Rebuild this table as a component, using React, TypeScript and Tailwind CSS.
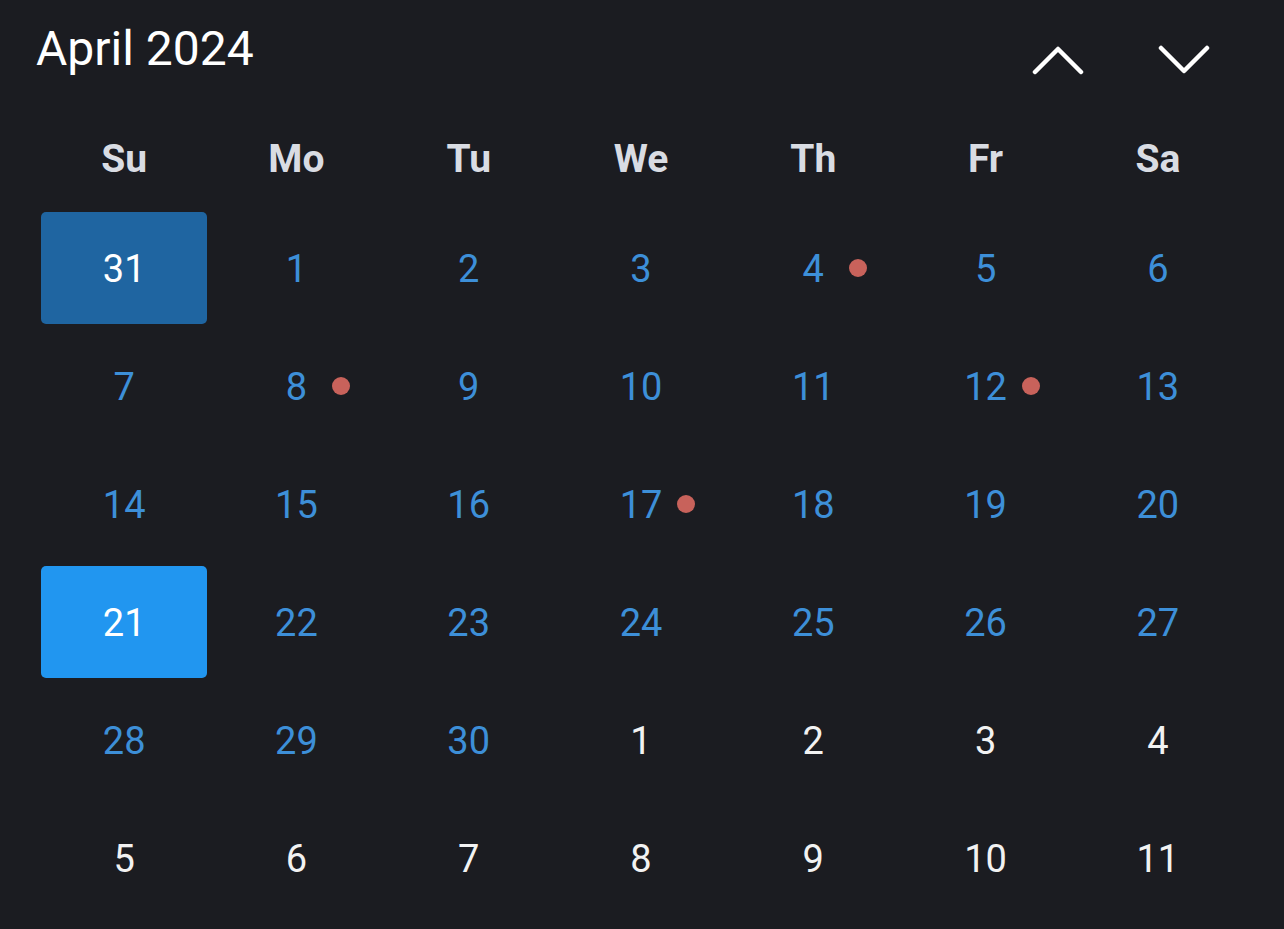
import React from "react";

const DAYS = ["Su", "Mo", "Tu", "We", "Th", "Fr", "Sa"];

type Cell = { d: number; cur: boolean; dot?: boolean; sel?: "dark" | "bright" };

const cells: Cell[] = [
  { d: 31, cur: true, sel: "dark" },
  ...Array.from({ length: 30 }, (_, i) => ({ d: i + 1, cur: true, dot: [4, 8, 12, 17].includes(i + 1), sel: i + 1 === 21 ? ("bright" as const) : undefined })),
  ...Array.from({ length: 11 }, (_, i) => ({ d: i + 1, cur: false })),
];

const Chevron = ({ up }: { up?: boolean }) => (
  <svg width="52" height="30" viewBox="0 0 52 30" fill="none" stroke="#ffffff" strokeWidth="4.5" strokeLinecap="round" strokeLinejoin="round">
    {up ? <path d="M3 27 L26 4 L49 27" /> : <path d="M3 3 L26 26 L49 3" />}
  </svg>
);

export default function App() {
  return (
    <div className="h-[929px] w-[1284px] overflow-hidden bg-[#1b1c21] pt-[21px] font-['Roboto',sans-serif]">
      <div className="flex items-start justify-between pl-[36px] pr-[37px]">
        <h1 className="text-[48px] leading-[56px] text-white">April 2024</h1>
        <div className="mt-[24px] flex">
          <button className="flex w-[126px] justify-center"><Chevron up /></button>
          <button className="flex w-[126px] justify-center"><Chevron /></button>
        </div>
      </div>

      <div className="pl-[38px] pr-[40px]">
        <div className="mt-[41px] grid h-[82px] grid-cols-7 items-center">
          {DAYS.map((d) => (
            <div key={d} className="text-center text-[39px] font-bold text-[#d9dce3]">{d}</div>
          ))}
        </div>

        <div className="mt-[9px] grid grid-cols-7">
          {cells.map((c, i) => (
            <div key={i} className="relative h-[118px] p-[3px]">
              <div
                className={`flex h-full items-center justify-center rounded-[5px] pt-[2px] text-[38px] ${
                  c.sel === "dark" ? "bg-[#1f65a1] text-white" : c.sel === "bright" ? "bg-[#2196f0] text-white" : c.cur ? "text-[#3d8fd8]" : "text-[#f2f2f2]"
                }`}
              >
                {c.d}
              </div>
              {c.dot && <span className="absolute left-[calc(50%+36px)] top-[calc(50%-9px)] h-[18px] w-[18px] rounded-full bg-[#c8625b]" />}
            </div>
          ))}
        </div>
      </div>
    </div>
  );
}
